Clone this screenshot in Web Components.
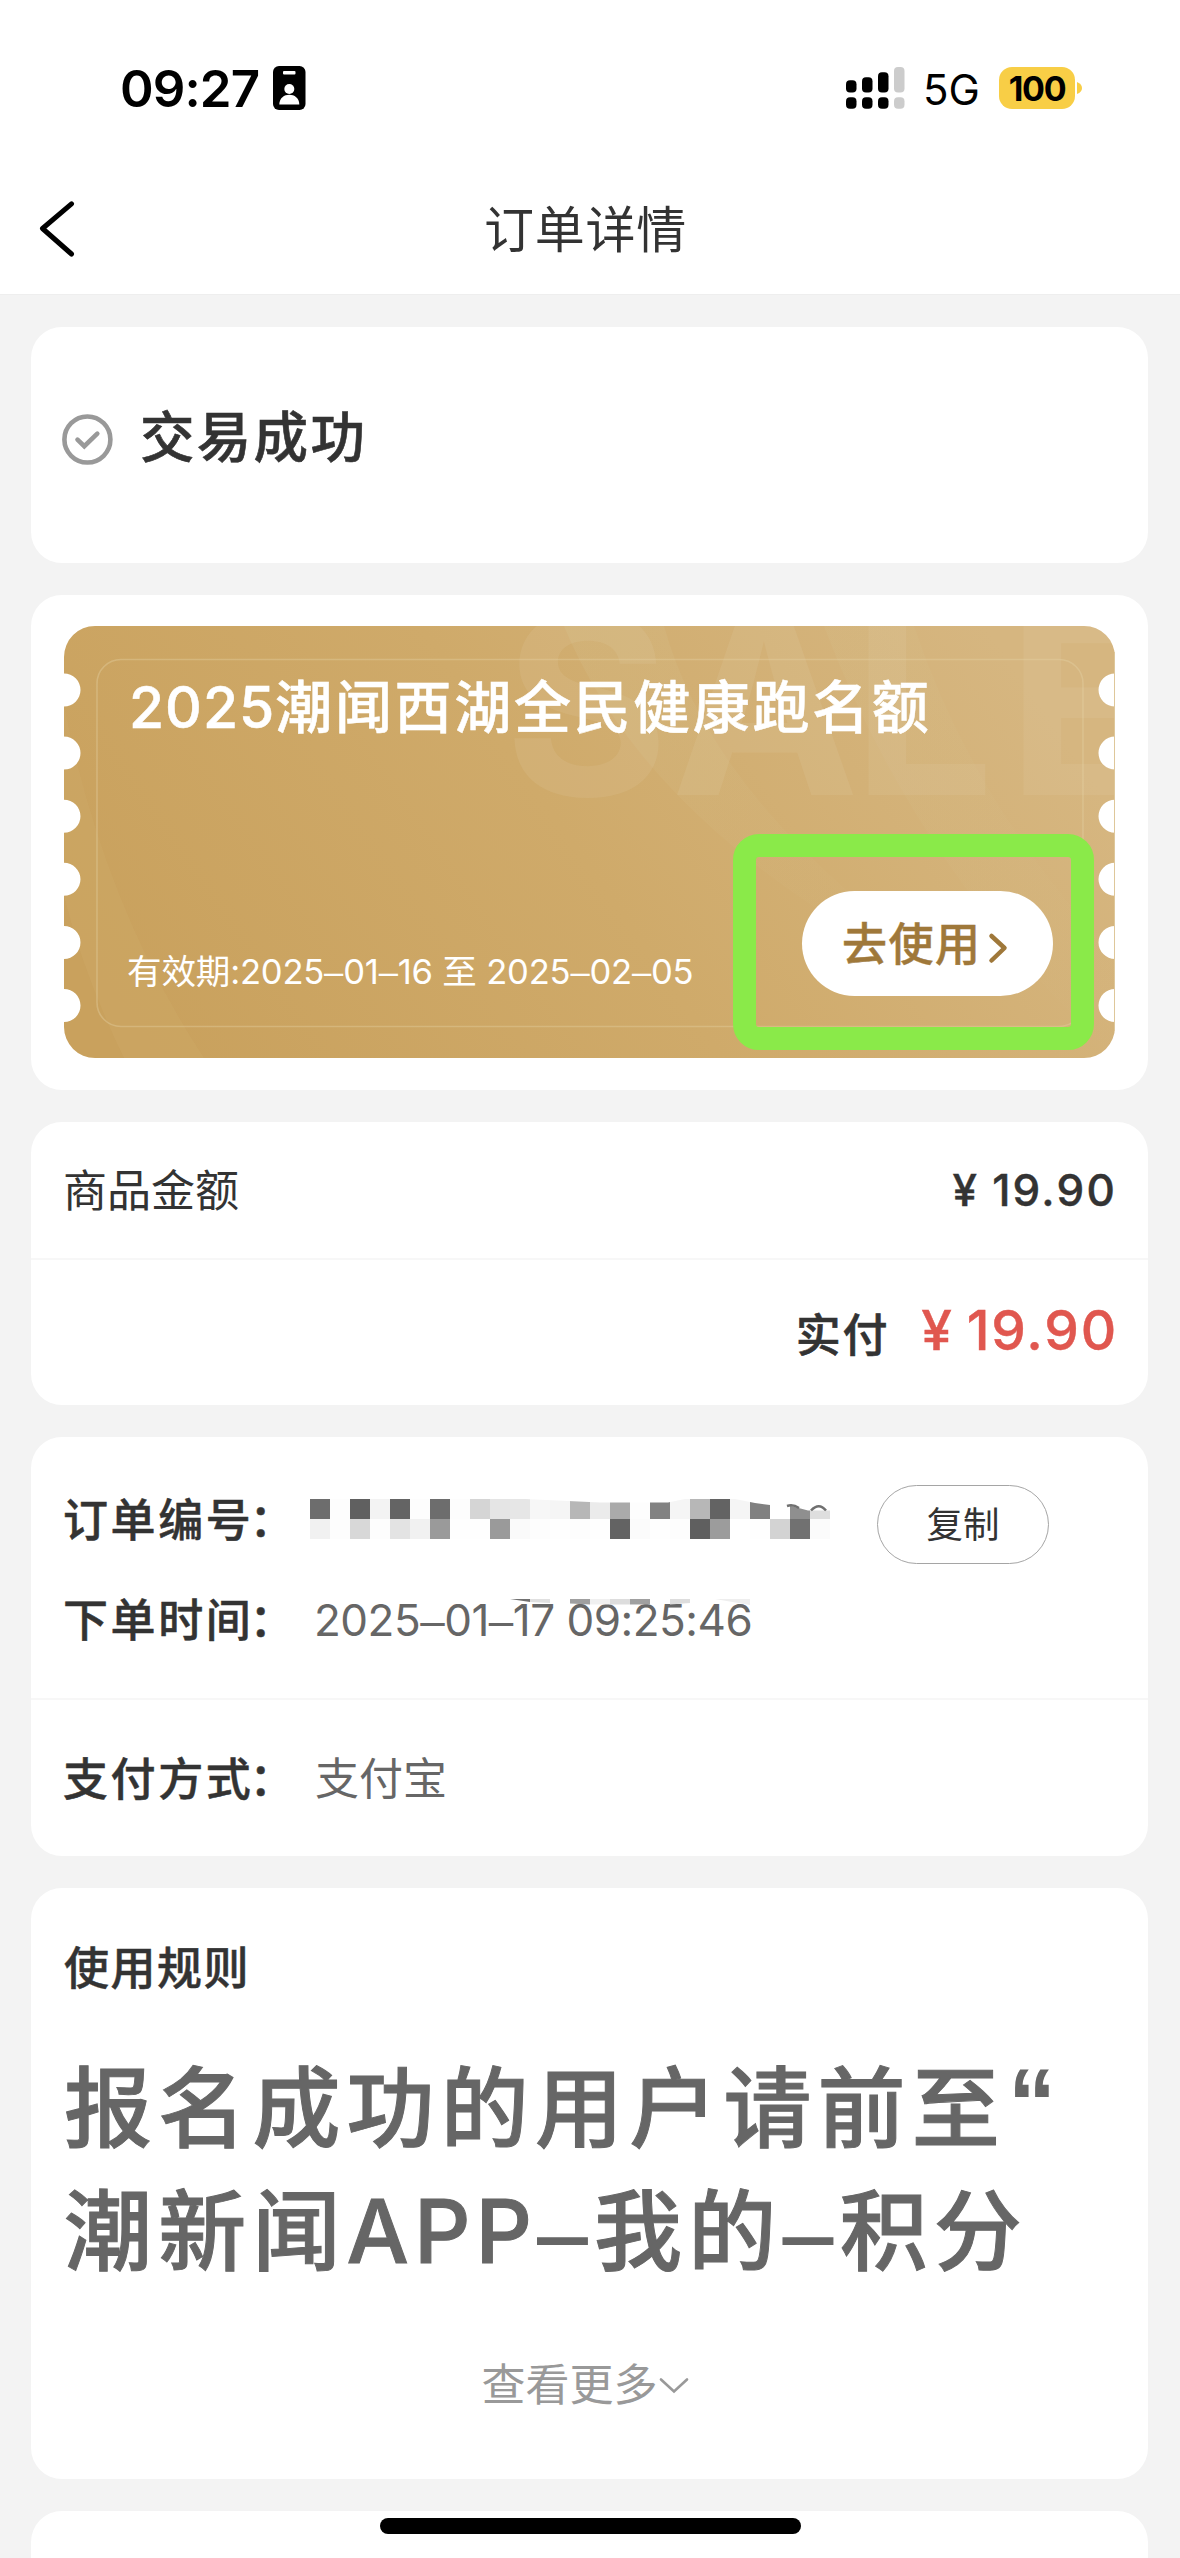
<!DOCTYPE html>
<html lang="zh-CN">
<head>
<meta charset="utf-8">
<title>订单详情</title>
<style>
html,body{margin:0;padding:0}
body{background:#f3f3f3;color:#333;font-family:Inter,"Noto Sans CJK SC",sans-serif;width:1180px;height:2558px;overflow:hidden}
</style>
</head>
<body>
<order-page></order-page>
<script>
const define = (name, html) => customElements.define(name, class extends HTMLElement {
  constructor() {
    super();
    this.attachShadow({ mode: 'open' }).innerHTML = '<style>*{box-sizing:border-box}:host{box-sizing:border-box;display:block}span{white-space:pre}</style>' + html;
  }
});

define('status-bar', `
<style>
:host{display:flex;align-items:center;height:132px;padding:44px 98px 0 120px;background:#fff;color:#000}
.time{font-size:51px;font-weight:600;line-height:88px;width:153px;letter-spacing:-.9px;padding-top:1px}
svg{display:block;flex:none}
.net{font-size:42px;line-height:88px;margin-left:18px;width:76px;padding-top:3px}
.bat{width:76px;height:42px;border-radius:13px;background:#f8ce46;font-size:34px;font-weight:700;line-height:43px;text-align:center;letter-spacing:-1.300px}
</style>
<span class="time">09:27</span>
<svg width="33" height="44" viewBox="0 0 33 44"><rect width="32.5" height="44" rx="6"/><rect x="10" y="5" width="12.5" height="3.4" rx="1" fill="#fff"/><circle cx="16.3" cy="23" r="5" fill="#fff"/><path d="M6.3 38.5C6.3 25.5 26.3 25.5 26.3 38.5Z" fill="#fff"/></svg>
<svg style="margin-left:auto" width="59" height="42" viewBox="0 0 59 42"><g><rect y="13.3" width="10.5" height="12.2" rx="4"/><rect x="16" y="10.2" width="10.5" height="15.3" rx="4"/><rect x="32" y="5.3" width="10.5" height="20.2" rx="4"/><rect y="30.3" width="10.5" height="11.4" rx="4"/><rect x="16" y="30.3" width="10.5" height="11.4" rx="4"/><rect x="32" y="30.3" width="10.5" height="11.4" rx="4"/></g><g fill="#ccc"><rect x="48" width="10.5" height="25.5" rx="4"/><rect x="48" y="30.3" width="10.5" height="11.4" rx="4"/></g></svg>
<span class="net">5G</span>
<div class="bat">100</div>
<svg width="6" height="12" style="margin-left:1px"><path d="M1 0Q6 2 6 6Q6 10 1 12Z" fill="#f8ce46"/></svg>
`);

define('nav-bar', `
<style>
:host{display:grid;grid-template-columns:180px 1fr 180px;align-items:center;height:163px;background:#fff;border-bottom:1px solid #eee;padding-top:33px}
svg{display:block;margin:-1px 0 0 38px}
span{font-size:50px;line-height:70px;text-align:center;letter-spacing:.7px;margin-left:-9px;padding-top:1px}
</style>
<svg width="38" height="56" viewBox="0 0 38 56"><path d="M33.5 2.8L4.5 27.5L33.5 53" fill="none" stroke="#000" stroke-width="5" stroke-linecap="round" stroke-linejoin="round"/></svg>
<span><slot></slot></span>
`);

define('info-card', `<style>:host{background:#fff;border-radius:31px;overflow:hidden;flex:none}</style><slot></slot>`);

define('order-state', `
<style>
:host{display:flex;align-items:center;height:236px;padding:0 0 16px 31px}
svg{display:block;margin-top:5px}
span{font-size:54.500px;font-weight:500;line-height:80px;letter-spacing:2.300px;margin-left:27px;-webkit-text-stroke:.6px}
</style>
<svg width="51" height="51" viewBox="0 0 51 51" fill="none" stroke="#999"><circle cx="25.4" cy="25.5" r="23" stroke-width="4.6"/><path d="M15.5 25.6L22.3 32.2L35.3 19.6" stroke-width="4.6" stroke-linecap="round"/></svg>
<span><slot></slot></span>
`);

define('coupon-ticket', `
<style>
:host{padding:31px 33px 32px 33px;height:495px}
.t{position:relative;height:432px;width:1051px;display:flex;flex-direction:column;justify-content:space-between;padding:40px 62px 50px 65px;color:#fff}
.bg{position:absolute;inset:0}
.title{position:relative;font-size:57px;font-weight:500;line-height:84px;letter-spacing:2.65px;-webkit-text-stroke:.5px}
.row{position:relative;display:flex;justify-content:space-between;align-items:flex-end;height:117px}
.date{font-size:34.6px;line-height:50px;letter-spacing:-.2px;height:50px;margin:0 0 12px -2px}
.btn{display:flex;align-items:center;width:251px;height:105px;border-radius:53px;background:#fff;color:#9f783a;font-size:45px;font-weight:500;letter-spacing:1.5px;line-height:60px;padding:2px 0 0 40px;margin-bottom:12px;-webkit-text-stroke:.5px}
.btn svg{margin:6px 0 0 6px}
.mark{position:absolute;left:669px;top:208px;width:361px;height:216px;border:23px solid #8aea49;border-radius:26px}
</style>
<div class="t">
<svg class="bg" width="1051" height="432" viewBox="0 0 1051 432">
<defs>
<linearGradient id="g" gradientUnits="userSpaceOnUse" x1="120" y1="470" x2="880" y2="-60"><stop offset="0" stop-color="#c9a15d"/><stop offset=".5" stop-color="#cfaa6a"/><stop offset="1" stop-color="#d6b680"/></linearGradient>
<linearGradient id="r" x1="0" y1="0" x2="1" y2="1"><stop offset="0" stop-color="#d6c08c" stop-opacity=".25"/><stop offset="1" stop-color="#d6c08c" stop-opacity="0"/></linearGradient>
<clipPath id="c"><path d="M31 0H1020A31 31 0 0 1 1051 31V47.500a16.300 16.300 0 0 0 0 33v30.100a16.300 16.300 0 0 0 0 33v30.100a16.300 16.300 0 0 0 0 33v30.100a16.300 16.300 0 0 0 0 33v30.100a16.300 16.300 0 0 0 0 33v30.100a16.300 16.300 0 0 0 0 33V401A31 31 0 0 1 1020 432H31A31 31 0 0 1 0 401V396a16.300 16.300 0 0 0 0-33v-30.100a16.300 16.300 0 0 0 0-33v-30.100a16.300 16.300 0 0 0 0-33v-30.100a16.300 16.300 0 0 0 0-33v-30.100a16.300 16.300 0 0 0 0-33v-30.100a16.300 16.300 0 0 0 0-33V31A31 31 0 0 1 31 0Z"/></clipPath>
</defs>
<g clip-path="url(#c)">
<rect width="1051" height="432" fill="url(#g)"/>
<path d="M500 0H600Q650 180 880 340L780 300Q570 170 500 0Z" fill="url(#r)"/>
<path d="M760 0H850Q910 180 1051 330V432Q850 240 760 0Z" fill="url(#r)" opacity=".8"/>
<path d="M0 80Q40 280 140 432H60Q20 350 0 270Z" fill="#d8b87c" opacity=".13"/>
<text x="440 607 788 943" y="169" font-family="Inter" font-weight="700" font-size="252" fill="#e6dcb8" fill-opacity=".13">SALE</text>
<rect x="33" y="33.500" width="986" height="367" rx="24" fill="none" stroke="#e6d3a6" stroke-opacity=".38" stroke-width="1.600"/>
</g>
<path d="M1050.500 26V405" stroke="#dec79a" stroke-width="1"/>
</svg>
<span class="title"><slot name="title"></slot></span>
<div class="row"><span class="date"><slot name="date"></slot></span>
<div class="btn"><span><slot name="action"></slot></span><svg width="20" height="32" viewBox="0 0 20 32"><path d="M3.500 4L16.500 16L3.500 28.500" fill="none" stroke="#9f783a" stroke-width="4.500" stroke-linecap="round" stroke-linejoin="round"/></svg></div></div>
<div class="mark"></div>
</div>
`);

define('amount-rows', `
<style>
.r{display:flex;align-items:center;padding:0 32px 0 32px}
.a{height:138px;border-bottom:2px solid #f7f7f7;justify-content:space-between;font-size:44px}
.n{padding-bottom:5px}
.b{height:145px;justify-content:flex-end}
.p{font-size:44px;font-weight:500;letter-spacing:2.200px;margin-right:-1px;-webkit-text-stroke:.4px}
.l{font-size:45px;font-weight:500;letter-spacing:1.700px;margin-right:32px;padding-bottom:1px;-webkit-text-stroke:.6px}
.q{font-size:55px;font-weight:500;color:#e0574f;letter-spacing:1.800px;margin-right:-2px;padding-bottom:5px;-webkit-text-stroke:.4px}
i{font-style:normal;margin-right:13px}
</style>
<div class="r a"><span class="n"><slot name="label"></slot></span><span class="p"><i>¥</i><slot name="price"></slot></span></div>
<div class="r b"><span class="l"><slot name="paid-label"></slot></span><span class="q"><i>¥</i><slot name="paid"></slot></span></div>
`);

define('field-row', `
<style>
:host{display:flex;align-items:center;height:100px;padding-left:32px;line-height:100px;font-size:44px;color:#666}
.k{width:252px;font-size:45px;font-weight:500;letter-spacing:2.600px;color:#333;padding-top:2px;-webkit-text-stroke:.5px}
</style>
<span class="k"><slot name="label"></slot></span><slot></slot>
`);

define('pixel-mask', `
<style>:host{width:522px;height:42px;margin-left:-5px}svg{display:block}</style>
<svg width="522" height="42" viewBox="0 0 522 42"></svg>
`);

define('copy-button', `
<style>:host{width:172px;height:79px;border:1px solid #a5a5a5;border-radius:40px;font-size:36.500px;line-height:79px;text-align:center;color:#333;margin:9px 0 0 45px}</style>
<slot></slot>
`);

define('more-toggle', `
<style>:host{display:flex;justify-content:center;align-items:center;font-size:44px;line-height:60px;color:#999;padding-right:9px}svg{margin:2px 0 0 1px}</style>
<slot></slot><svg width="30" height="18" viewBox="0 0 30 18"><path d="M2 2.500L15 14.500L28 2.500" fill="none" stroke="#999" stroke-width="2.600" stroke-linecap="round"/></svg>
`);

define('order-page', `
<style>
:host{position:relative;width:1180px;height:2558px;overflow:hidden}
main{display:flex;flex-direction:column;gap:32px;padding:32px 32px 0 31px}
i{font-family:"Liberation Sans";font-style:normal}
.year{letter-spacing:1px}
.colon{margin-left:-4px}
.sep{height:2px;background:#f7f7f7}
.ids{height:419px;padding-top:33px}
.pay{margin-top:29px}
.date{position:relative;line-height:100px;letter-spacing:-.5px;margin-left:-1px}
.frag{position:absolute;left:196px;top:29px}
.rules{height:591px;padding:51px 33px 0 33px}
.h{display:block;font-size:45px;font-weight:500;line-height:60px;letter-spacing:1.500px;-webkit-text-stroke:.5px}
.big{font-size:88px;font-weight:500;line-height:123px;letter-spacing:6.200px;color:#666;margin:48px 0 62px 0;height:246px;-webkit-text-stroke:1px}
.big span{display:block}
.big .app{display:inline;letter-spacing:5px}
.big i{margin:0 1px;-webkit-text-stroke:2px}
.big b{font-family:"Liberation Sans";font-size:96px;line-height:0;vertical-align:4px;margin-left:2px;-webkit-text-stroke:0}
.home{position:absolute;left:380px;top:2518px;width:421px;height:15.500px;border-radius:8px;background:#000}
</style>
<status-bar></status-bar>
<nav-bar>订单详情</nav-bar>
<main>
<info-card><order-state>交易成功</order-state></info-card>
<info-card><coupon-ticket><span slot="title"><span class="year">2025</span>潮闻西湖全民健康跑名额</span><span slot="date">有效期:2025<i>–</i>01<i>–</i>16 至 2025<i>–</i>02<i>–</i>05</span><span slot="action">去使用</span></coupon-ticket></info-card>
<info-card><amount-rows><span slot="label">商品金额</span><span slot="price">19.90</span><span slot="paid-label">实付</span><span slot="paid">19.90</span></amount-rows></info-card>
<info-card class="ids">
<field-row><span slot="label">订单编号<span class="colon">：</span></span><pixel-mask></pixel-mask><copy-button>复制</copy-button></field-row>
<field-row><span slot="label">下单时间<span class="colon">：</span></span><span class="date">2025<i>–</i>01<i>–</i>17 09:25:46<svg class="frag" width="242" height="6" viewBox="0 0 242 6"><path d="M0 0H20V3Z" fill="#707070"/><path d="M20 0H40V4L20 3Z" fill="#e0e0e0"/><path d="M60 0H80V5.500L60 4.500Z" fill="#9f9f9f"/><path d="M80 0H100V5.500H80Z" fill="#f0f0f0"/><path d="M100 0H120V5.500H100Z" fill="#ddd"/><path d="M120 0H140V5.500H120Z" fill="#a0a0a0"/><path d="M160 0H180V4L160 5.500Z" fill="#ddd"/><path d="M205 0H240V6Z" fill="#eee"/></svg></span></field-row>
<div class="sep" style="margin-top:28px"></div>
<field-row class="pay"><span slot="label">支付方式<span class="colon">：</span></span><span>支付宝</span></field-row>
</info-card>
<info-card class="rules"><span class="h">使用规则</span><div class="big"><span>报名成功的用户请前至<b>“</b></span><span>潮新闻<span class="app">APP</span><i>–</i>我的<i>–</i>积分</span></div><more-toggle>查看更多</more-toggle></info-card>
<info-card style="height:80px"></info-card>
</main>
<div class="home"></div>
`);

/* Pixelated order number: two rows of 20px cells under an uneven top edge. */
(() => {
  const page = document.querySelector('order-page').shadowRoot;
  const svg = page.querySelector('pixel-mask').shadowRoot.querySelector('svg');
  const top = '6d fd 60 f3 64 fd 6d fd d5 e5 e6 f7 f5 b7 eb aa fd 82 f5 b7 63 f5 80 ff 8f de'.split(' ');
  const low = 'f1 fd d8 fd e3 f1 9a fe fe 9a fa fd fe fd fe 63 fb fe fd 5f 9c ff fe d3 71 fb'.split(' ');
  const cell = (v, i, y) => `<rect x="${i * 20}" y="${y}" width="20" height="20" fill="#${v}${v}${v}"/>`;
  svg.innerHTML = '<defs><clipPath id="e"><path d="M0 0H215L290 3.500H358L375 0H425L445 4L460 6H477L485 8L498 11.500H520V40H0Z"/></clipPath></defs>' +
    '<g shape-rendering="crispEdges" clip-path="url(#e)">' + top.map((v, i) => cell(v, i, 0)).join('') + low.map((v, i) => cell(v, i, 20)).join('') + '</g>' +
    '<path d="M477 7Q483 5 489 9M501 11.500Q509 3 516 11.500" fill="none" stroke="#707070" stroke-width="2.500"/>';
})();
</script>
</body>
</html>
